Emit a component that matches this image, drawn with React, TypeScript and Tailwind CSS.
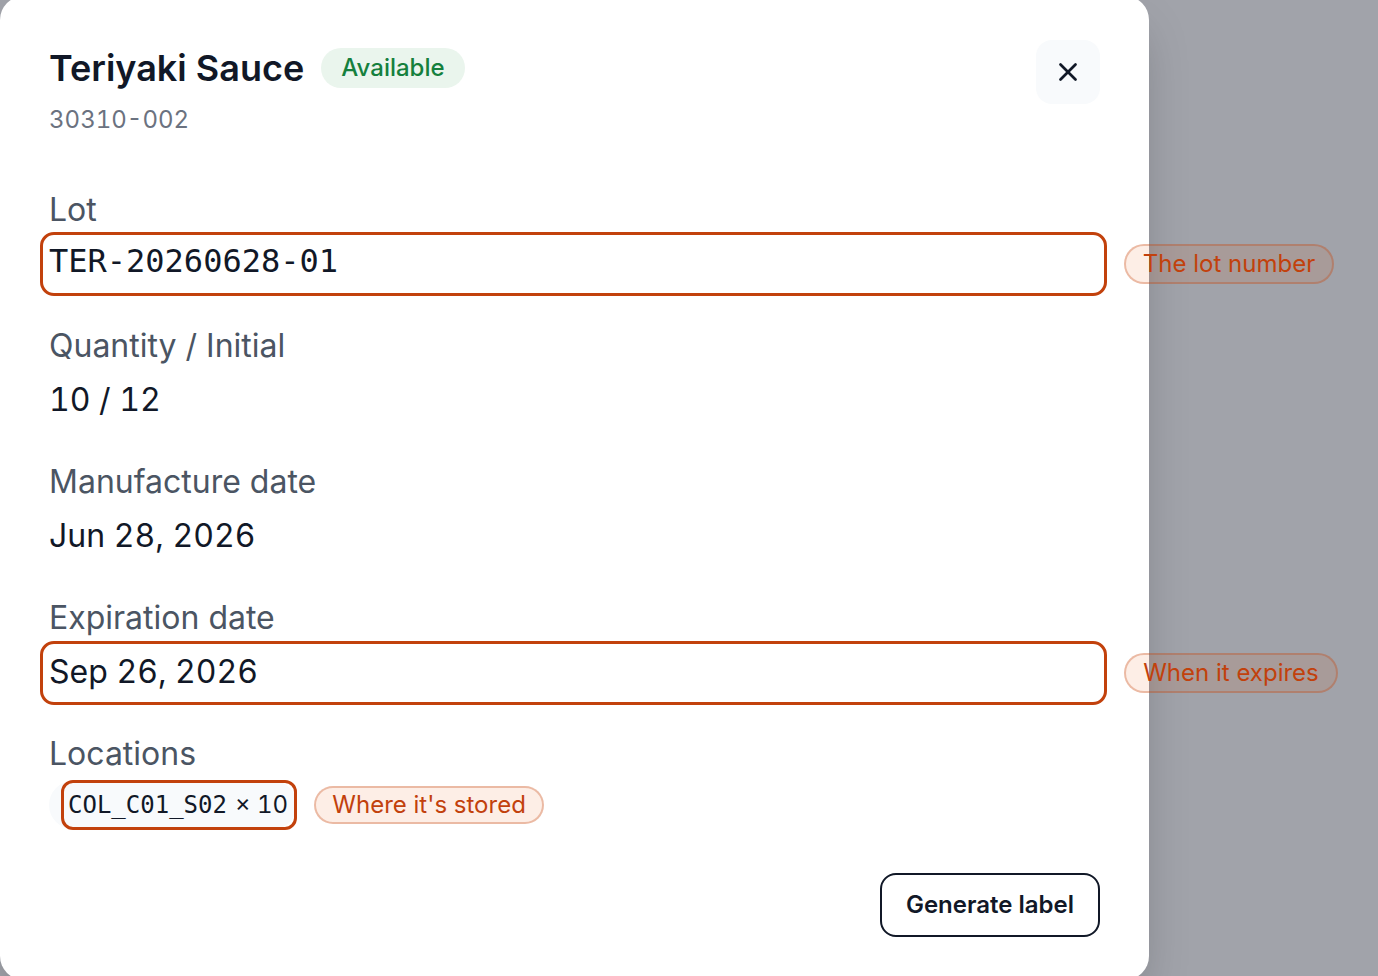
import { X } from 'lucide-react';

type Note = { text: string; width: string; frame: string };

function Callout({ text, className }: { text: string; className: string }) {
  return (
    <span
      className={`flex items-center justify-center rounded-full border-2 border-[#c2410c]/30 bg-[#ea580c]/10 text-[24px] whitespace-nowrap text-[#c2410c] ${className}`}
    >
      {text}
    </span>
  );
}

function Field({ label, children, note, mono }: { label: string; children: React.ReactNode; note?: Note; mono?: boolean }) {
  return (
    <div>
      <div className="text-[32px] leading-[40px] text-[#4b5563]">{label}</div>
      <div className={`relative ${mono ? 'mt-[11px] mb-[3px]' : 'mt-[14px]'}`}>
        <div
          className={
            mono
              ? "font-['DejaVu_Sans_Mono',monospace] text-[32px] leading-[40px] text-[#111827]"
              : 'text-[32px] leading-[40px] text-[#111827] tabular-nums'
          }
        >
          {children}
        </div>
        {note && (
          <div className={`pointer-events-none absolute -right-[7px] -left-[9px] rounded-[14px] border-[3px] border-[#c2410c] ${note.frame}`}>
            <Callout
              text={note.text}
              className={`absolute top-1/2 left-[calc(100%+20px)] h-10 -translate-y-1/2 ${note.width}`}
            />
          </div>
        )}
      </div>
    </div>
  );
}

export default function App() {
  return (
    <div className="flex h-[976px] w-[1378px] overflow-hidden bg-[#a1a3aa] font-['Inter',sans-serif]">
      <div className="relative -mt-1 h-[984px] w-[1149px] shrink-0 rounded-[24px] bg-white px-[49px] pt-[52px] shadow-2xl">
        <div className="flex items-start justify-between">
          <div>
            <div className="flex items-center gap-[17px]">
              <h2 className="text-[36px] leading-[40px] font-semibold text-[#111827]">Teriyaki Sauce</h2>
              <span className="flex h-10 items-center rounded-full bg-[#eaf5ed] px-5 text-[24px] font-medium text-[#15803d]">
                Available
              </span>
            </div>
            <p className="mt-4 text-[24px] leading-8 text-[#6b7280] tabular-nums">30310-002</p>
          </div>
          <button className="-mt-2 flex h-16 w-16 items-center justify-center rounded-2xl bg-[#f8fafc] text-[#111827]">
            <X size={30} strokeWidth={2.2} />
          </button>
        </div>

        <div className="mt-[54px] flex flex-col gap-[42px]">
          <Field label="Lot" mono note={{ text: 'The lot number', width: 'w-[210px]', frame: '-top-[9px] -bottom-[15px]' }}>
            TER-20260628-01
          </Field>
          <Field label="Quantity / Initial">10 / 12</Field>
          <Field label="Manufacture date">Jun 28, 2026</Field>
          <Field label="Expiration date" note={{ text: 'When it expires', width: 'w-[214px]', frame: '-top-[11px] -bottom-[13px]' }}>
            Sep 26, 2026
          </Field>
          <div>
            <div className="text-[32px] leading-[40px] text-[#4b5563]">Locations</div>
            <div className="mt-[7px] flex items-center gap-[17px]">
              <div className="relative">
                <span className="flex h-12 items-center gap-2 rounded-full bg-[#f8fafc] pr-[9px] pl-[19px] text-[#111827]">
                  <span className="font-['DejaVu_Sans_Mono',monospace] text-[24px]">COL_C01_S02</span>
                  <span className="text-[24px] tabular-nums">× 10</span>
                </span>
                <div className="pointer-events-none absolute -top-px right-0 -bottom-px left-[12px] rounded-[12px] border-[3px] border-[#c2410c]" />
              </div>
              <Callout text="Where it's stored" className="h-[38px] w-[230px]" />
            </div>
          </div>
        </div>

        <div className="mt-[44px] flex justify-end">
          <button className="h-16 w-[220px] rounded-2xl border-2 border-[#111827] text-[24px] font-semibold text-[#111827]">
            Generate label
          </button>
        </div>
      </div>
    </div>
  );
}
